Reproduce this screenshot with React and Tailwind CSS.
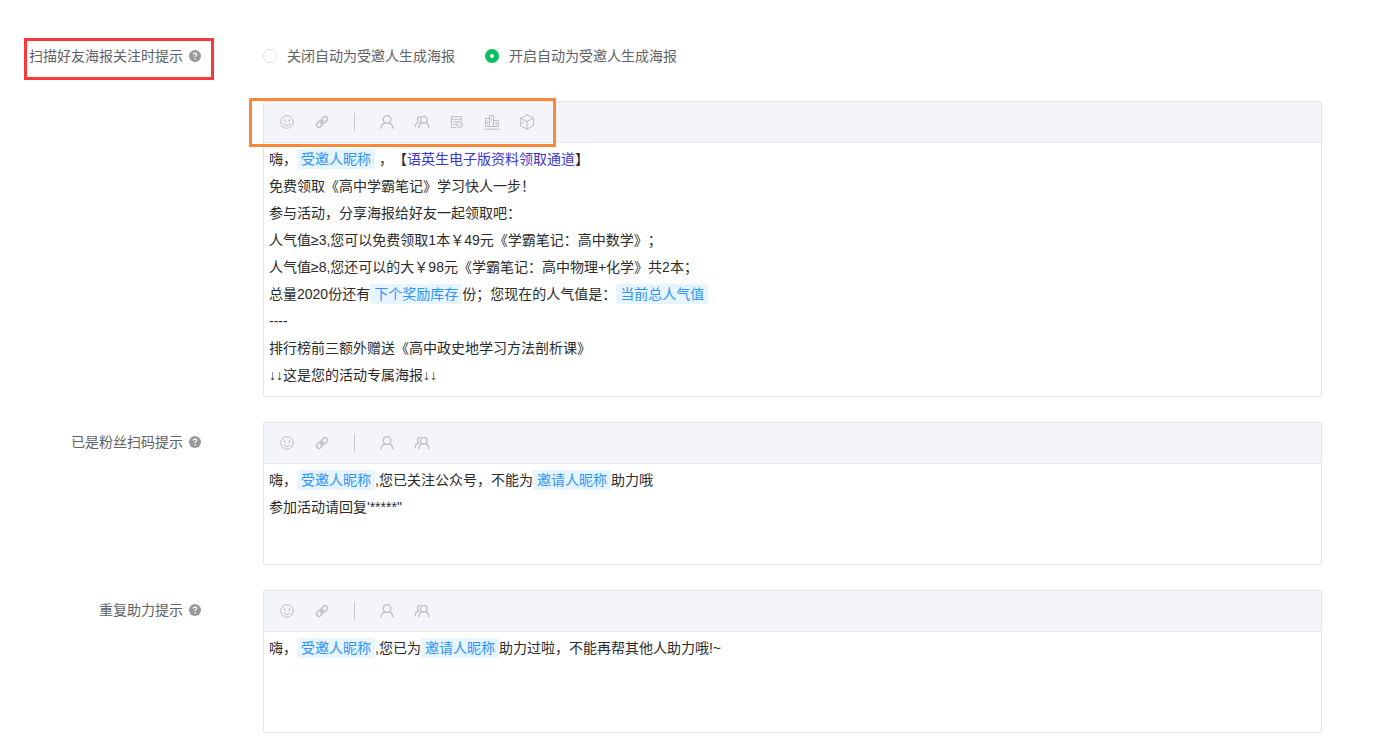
import { useState } from "react";

const iconProps = {
  width: 16,
  height: 16,
  viewBox: "0 0 16 16",
  fill: "none",
  stroke: "currentColor",
  strokeLinecap: "round",
  strokeLinejoin: "round",
  "aria-hidden": true,
};

function SmileIcon() {
  return (
    <svg {...iconProps}>
      <circle cx="8" cy="8" r="6.3" />
      <path d="M5.7 5.9v1.2M10.3 5.9v1.2" strokeWidth="1.3" />
      <path d="M4.8 9.3c.6 1.5 1.8 2.2 3.2 2.2s2.6-.7 3.2-2.2" />
    </svg>
  );
}

function LinkIcon() {
  return (
    <svg {...iconProps} strokeWidth="1.4">
      <rect x="6.9" y="3.6" width="6.8" height="4.6" rx="1.6" transform="rotate(-45 10.3 5.9)" />
      <rect x="2.3" y="7.9" width="6.8" height="4.6" rx="1.6" transform="rotate(-45 5.7 10.2)" />
      <path d="M6.6 9.4l2.8-2.8" />
    </svg>
  );
}

function UserIcon() {
  return (
    <svg {...iconProps} strokeWidth="1.3">
      <circle cx="8" cy="5.5" r="3.8" />
      <path d="M2 14.3c.2-2.900 1.600-4.700 3.900-5.500M14 14.300c-.2-2.900-1.600-4.700-3.900-5.500" />
    </svg>
  );
}

function UsersIcon() {
  return (
    <svg {...iconProps} strokeWidth="1.3">
      <circle cx="9.800" cy="5.700" r="3.300" />
      <path d="M4.800 13.500c.1-2.400 1.200-4 3.200-4.800M14.800 13.500c-.1-2.400-1.200-4-3.200-4.800" />
      <path d="M6.200 2.600C4.600 2.500 3.500 3.700 3.500 5.300c0 1.100.5 2 1.300 2.600C2.600 8.600 1.300 10.300 1.200 12.600" />
    </svg>
  );
}

function FormIcon() {
  return (
    <svg {...iconProps}>
      <path d="M6.500 13.500h-4v-11h10v4M2.500 5.200h10M4.700 7.700h3.600M4.700 10.300h1.800" />
      <circle cx="10.500" cy="10.700" r="3" />
      <path d="M9.200 10.700l1 1 1.700-1.900" />
    </svg>
  );
}

function PodiumIcon() {
  return (
    <svg {...iconProps}>
      <path d="M5.500 12.500v-11h4v11M5.500 4.500h-4v8h12.800v-6H9.500M.8 15.200h14.400" />
      <path d="M7 4.200l.7-.5v3M3 7h1v1.500H3V10h1M11.500 8.500h1V10h-1M12.500 10v1" strokeWidth="0.8" />
    </svg>
  );
}

function BoxIcon() {
  return (
    <svg {...iconProps}>
      <path d="M8 .9l6.600 3.300v7.300L8 15.100l-6.600-3.600V4.200L8 .9z" />
      <path d="M1.400 4.200L8 7.500l6.600-3.300M8 7.500v7.600M3.600 8v1.600" />
    </svg>
  );
}

function HelpIcon() {
  return (
    <svg width="12" height="12" viewBox="0 0 12 12" className="shrink-0" aria-hidden="true">
      <circle cx="6" cy="6" r="6" fill="#999" />
      <path
        d="M4.300 4.700c0-1 .7-1.600 1.700-1.600s1.700.6 1.700 1.500c0 1.100-1.600 1.200-1.600 2.400"
        fill="none"
        stroke="#fff"
        strokeWidth="1.200"
      />
      <circle cx="6.100" cy="8.800" r=".8" fill="#fff" />
    </svg>
  );
}

const baseTools = [
  { name: "表情", icon: SmileIcon },
  { name: "链接", icon: LinkIcon },
];

const userTools = [
  { name: "受邀人昵称", icon: UserIcon },
  { name: "邀请人昵称", icon: UsersIcon },
];

const rewardTools = [
  { name: "奖励库存", icon: FormIcon },
  { name: "人气值", icon: PodiumIcon },
  { name: "奖品", icon: BoxIcon },
];

function ToolButton({ name, icon: Icon }) {
  return (
    <button
      type="button"
      aria-label={name}
      className="flex h-full w-[35px] items-center justify-center text-[#bfbfc2] hover:text-gray-500"
    >
      <Icon />
    </button>
  );
}

function Tag({ children }) {
  return (
    <span className="inline-block h-5 rounded-[2px] bg-[#e6f5ff] px-1 leading-5 text-[#2e94ff]">
      {children}
    </span>
  );
}

function Editor({ label, tools, highlight, children }) {
  return (
    <div className="relative min-w-0 rounded-[2px] border border-[#e4e5e9]">
      <div className="flex h-[41px] items-center border-b border-[#e8eaed] bg-[#f4f5fa] pl-[5px]">
        {baseTools.map((tool) => (
          <ToolButton key={tool.name} {...tool} />
        ))}
        <span className="flex w-[30px] justify-center">
          <span className="h-[18px] w-px bg-[#c8c8ca]" />
        </span>
        {tools.map((tool) => (
          <ToolButton key={tool.name} {...tool} />
        ))}
      </div>
      <div
        role="textbox"
        aria-multiline="true"
        aria-label={label}
        contentEditable
        suppressContentEditableWarning
        spellCheck={false}
        className="min-h-[100px] px-[5px] pt-[3px] pb-[7px] leading-[27px] text-[#2b2b2b] outline-none [text-spacing-trim:space-all]"
      >
        {children}
      </div>
      {highlight && (
        <div className="pointer-events-none absolute -top-1 -left-[15px] h-[49px] w-[307px] border-3 border-[#f98939]" />
      )}
    </div>
  );
}

function Label({ children, highlight }) {
  return (
    <div className="relative flex h-10 items-center justify-end gap-[6px] text-[#606266]">
      <span>{children}</span>
      <HelpIcon />
      {highlight && (
        <div className="pointer-events-none absolute top-[2px] -right-[13px] h-[42px] w-[190px] border-3 border-[#fb3838]" />
      )}
    </div>
  );
}

const posterOptions = [
  { value: "off", text: "关闭自动为受邀人生成海报" },
  { value: "on", text: "开启自动为受邀人生成海报" },
];

export default function App() {
  const [poster, setPoster] = useState("on");

  return (
    <form className="min-h-screen bg-white pt-9 pr-[54px] pb-[22px] font-['Liberation_Sans','Noto_Sans_CJK_SC',sans-serif] text-[14px] leading-5">
      <div className="grid grid-cols-[201px_minmax(0,1fr)] gap-x-[62px]">
        {/* Poster switch */}
        <Label highlight>扫描好友海报关注时提示</Label>
        <div className="flex h-10 items-center gap-[30px] text-[#606266]">
          {posterOptions.map((option) => (
            <label key={option.value} className="flex items-center gap-[10px]">
              <input
                type="radio"
                name="poster"
                value={option.value}
                checked={poster === option.value}
                onChange={() => setPoster(option.value)}
                className="size-[14px] appearance-none rounded-full border border-[#dcdfe6] bg-white checked:border-5 checked:border-[#07c160]"
              />
              {option.text}
            </label>
          ))}
        </div>

        {/* Message shown when a friend's poster is scanned */}
        <div className="col-start-2 mt-[25px]">
          <Editor
            label="扫描好友海报关注时提示"
            tools={[...userTools, ...rewardTools]}
            highlight
          >
            <p>
              嗨，<Tag>受邀人昵称</Tag> ，【
              <a href="#resource" className="text-[#3c35d0]">
                语英生电子版资料领取通道
              </a>
              】
            </p>
            <p>免费领取《高中学霸笔记》学习快人一步！</p>
            <p>参与活动，分享海报给好友一起领取吧：</p>
            <p>人气值≥3,您可以免费领取1本￥49元《学霸笔记：高中数学》；</p>
            <p>人气值≥8,您还可以的大￥98元《学霸笔记：高中物理+化学》共2本；</p>
            <p>
              总量2020份还有<Tag>下个奖励库存</Tag>份；您现在的人气值是：
              <Tag>当前总人气值</Tag>
            </p>
            <p>----</p>
            <p>排行榜前三额外赠送《高中政史地学习方法剖析课》</p>
            <p>↓↓这是您的活动专属海报↓↓</p>
          </Editor>
        </div>
      </div>

      {/* Already a follower */}
      <div className="mt-[25px] grid grid-cols-[201px_minmax(0,1fr)] gap-x-[62px]">
        <Label>已是粉丝扫码提示</Label>
        <Editor label="已是粉丝扫码提示" tools={userTools}>
          <p>
            嗨，<Tag>受邀人昵称</Tag>,您已关注公众号，不能为<Tag>邀请人昵称</Tag>助力哦
          </p>
          <p>参加活动请回复'*****"</p>
        </Editor>
      </div>

      {/* Repeated support */}
      <div className="mt-[25px] grid grid-cols-[201px_minmax(0,1fr)] gap-x-[62px]">
        <Label>重复助力提示</Label>
        <Editor label="重复助力提示" tools={userTools}>
          <p>
            嗨，<Tag>受邀人昵称</Tag>,您已为<Tag>邀请人昵称</Tag>
            助力过啦，不能再帮其他人助力哦!~
          </p>
        </Editor>
      </div>
    </form>
  );
}
